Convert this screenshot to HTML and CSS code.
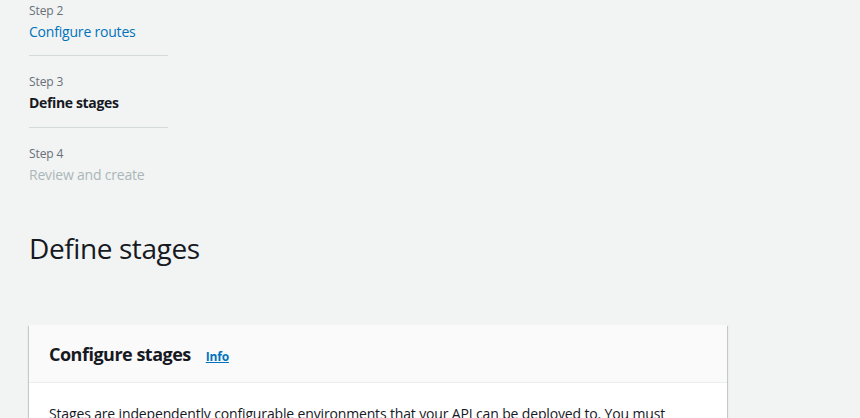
FILE: index.html
```html
<!DOCTYPE html>
<html>
<head>
<meta charset="utf-8">
<link rel="stylesheet" href="styles.css">
</head>
<body>
<div class="page">
  <nav class="steps">
    <div class="step first">
      <div class="step-num">Step 2</div>
      <a class="step-link" href="#">Configure routes</a>
    </div>
    <div class="step">
      <div class="step-num">Step 3</div>
      <div class="step-current">Define stages</div>
    </div>
    <div class="step last">
      <div class="step-num">Step 4</div>
      <div class="step-disabled">Review and create</div>
    </div>
  </nav>
  <h1 class="title">Define stages</h1>
  <section class="card">
    <header class="card-header">
      <h2 class="card-title">Configure stages</h2>
      <a class="info" href="#">Info</a>
    </header>
    <div class="card-body">
      <p class="desc">Stages are independently configurable environments that your API can be deployed to. You must</p>
    </div>
  </section>
</div>
</body>
</html>
```
FILE: styles.css
```css
html, body {
  margin: 0;
  padding: 0;
  background: #f2f3f3;
  font-family: "Open Sans", "Noto Sans", sans-serif;
  color: #16191f;
  overflow: hidden;
}
.page {
  padding: 2px 0 0 29px;
}
.steps {
  width: 139px;
}
.step {
  padding: 17px 0 13px;
  border-bottom: 1px solid #d5dbdb;
}
.step.first {
  padding-top: 0;
  padding-bottom: 12px;
}
.step.last {
  border-bottom: none;
}
.step-num {
  font-size: 12px;
  line-height: 18px;
  color: #687078;
  letter-spacing: -0.1px;
}
.step-link,
.step-current,
.step-disabled {
  display: block;
  margin-top: 1px;
  font-size: 14px;
  line-height: 22px;
  letter-spacing: -0.2px;
  white-space: nowrap;
}
.step-link {
  color: #0073bb;
  text-decoration: none;
}
.step-current {
  font-weight: 700;
  color: #16191f;
  letter-spacing: -0.35px;
}
.step-disabled {
  color: #aab7b8;
}
.title {
  margin: 31px 0 0;
  font-size: 28px;
  line-height: 36px;
  font-weight: 400;
  letter-spacing: -0.4px;
  color: #16191f;
}
.card {
  margin-top: 59px;
  width: 698px;
  background: #fff;
  box-shadow: 0 1px 1px 0 rgba(0,28,36,0.3), 1px 1px 1px 0 rgba(0,28,36,0.15), -1px 1px 1px 0 rgba(0,28,36,0.15);
}
.card-header {
  display: flex;
  align-items: baseline;
  gap: 15px;
  padding: 17px 20px 16px;
  background: #fafafa;
  border-bottom: 1px solid #eaeded;
}
.card-title {
  margin: 0;
  font-size: 18px;
  line-height: 24px;
  font-weight: 700;
  letter-spacing: -0.5px;
  color: #16191f;
}
.info {
  font-size: 12px;
  font-weight: 700;
  color: #0073bb;
  text-decoration: underline;
  letter-spacing: -0.2px;
}
.card-body {
  padding: 20px 20px 18px;
}
.desc {
  margin: 0;
  font-size: 14px;
  line-height: 22px;
  letter-spacing: -0.15px;
  color: #16191f;
}
```
